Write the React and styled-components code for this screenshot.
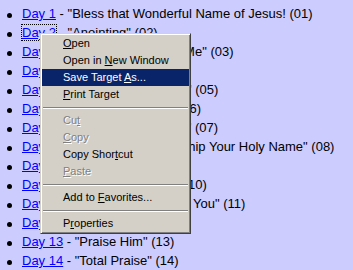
import React from 'react';
import styled, { createGlobalStyle } from 'styled-components';

const Global = createGlobalStyle`
  html, body { margin: 0; padding: 0; background: #ccccff; }
  body { font-family: "Liberation Sans", Arial, sans-serif; font-size: 13px; overflow: hidden; }
`;

const Page = styled.div`
  position: relative;
  width: 353px;
  height: 270px;
  background: #ccccff;
  overflow: hidden;
`;

const List = styled.ul`
  list-style: none;
  margin: 0;
  padding: 4px 0 0 0;
`;

const Row = styled.li`
  display: flex;
  align-items: flex-start;
  height: 19px;
  line-height: 19px;
  white-space: nowrap;
  color: #000;
`;

const Bullet = styled.span`
  flex: none;
  width: 5px;
  height: 5px;
  border-radius: 50%;
  background: #000;
  margin: 9px 10px 0 7px;
`;

const Text = styled.span`
  display: block;
`;

const DayLink = styled.a`
  color: #0000ff;
  text-decoration: underline;
  outline: ${p => (p.$focused ? '1px dotted #000' : 'none')};
  outline-offset: 0;
`;

const Menu = styled.div`
  position: absolute;
  left: 40px;
  top: 33px;
  width: 151px;
  box-sizing: border-box;
  background: #d4d0c8;
  border: 1px solid;
  border-color: #d4d0c8 #404040 #404040 #d4d0c8;
  box-shadow: inset 1px 1px #ffffff, inset -1px -1px #808080;
  padding: 1px;
  font-family: "Liberation Sans", Arial, sans-serif;
  font-size: 11px;
`;

const MenuItem = styled.div`
  height: 17px;
  line-height: 17px;
  padding-left: 21px;
  white-space: nowrap;
  background: ${p => (p.$active ? '#0a246a' : 'transparent')};
  color: ${p => (p.$active ? '#ffffff' : p.$disabled ? '#808080' : '#000000')};
  text-shadow: ${p => (p.$disabled ? '1px 1px 0 #ffffff' : 'none')};
  cursor: default;
`;

const Separator = styled.div`
  height: 9px;
  display: flex;
  flex-direction: column;
  justify-content: center;
  padding: 0 1px;
  &::before {
    content: "";
    display: block;
    height: 1px;
    background: #808080;
  }
  &::after {
    content: "";
    display: block;
    height: 1px;
    background: #ffffff;
  }
`;

const rows = [
  ['Day 1', ' - "Bless that Wonderful Name of Jesus! (01)'],
  ['Day 2', ' - "Anointing" (02)'],
  ['Day 3', ' - "Father, Remember Me" (03)'],
  ['Day 4', ' - "Abba Father" (04)'],
  ['Day 5', ' - "I Will Bless the Lord" (05)'],
  ['Day 6', ' - "Great Is the Lord" (06)'],
  ['Day 7', ' - "How Great Thou Art" (07)'],
  ['Day 8', ' - "I Will Bow and Worship Your Holy Name" (08)'],
  ['Day 9', ' - "Holy Spirit" (09)'],
  ['Day 10', ' - "The Lord Reigns" (10)'],
  ['Day 11', ' - "Power and Glory to You" (11)'],
  ['Day 12', ' - "Hallelujah" (12)'],
  ['Day 13', ' - "Praise Him" (13)'],
  ['Day 14', ' - "Total Praise" (14)'],
];

const menu = [
  { k: 'i', label: <><u>O</u>pen</> },
  { k: 'i', label: <>Open in <u>N</u>ew Window</> },
  { k: 'i', label: <>Save Target <u>A</u>s...</>, active: true },
  { k: 'i', label: <><u>P</u>rint Target</> },
  { k: 's' },
  { k: 'i', label: <>Cu<u>t</u></>, disabled: true },
  { k: 'i', label: <><u>C</u>opy</>, disabled: true },
  { k: 'i', label: <>Copy Shor<u>t</u>cut</> },
  { k: 'i', label: <><u>P</u>aste</>, disabled: true },
  { k: 's' },
  { k: 'i', label: <>Add to <u>F</u>avorites...</> },
  { k: 's' },
  { k: 'i', label: <>P<u>r</u>operties</> },
];

export default function App() {
  return (
    <Page>
      <Global />
      <List>
        {rows.map(([day, rest], i) => (
          <Row key={day}>
            <Bullet />
            <Text>
              <DayLink href="#" $focused={i === 1} onClick={e => e.preventDefault()}>{day}</DayLink>
              {rest}
            </Text>
          </Row>
        ))}
      </List>
      <Menu>
        {menu.map((m, i) =>
          m.k === 's' ? (
            <Separator key={i} />
          ) : (
            <MenuItem key={i} $active={m.active} $disabled={m.disabled}>
              {m.label}
            </MenuItem>
          )
        )}
      </Menu>
    </Page>
  );
}
